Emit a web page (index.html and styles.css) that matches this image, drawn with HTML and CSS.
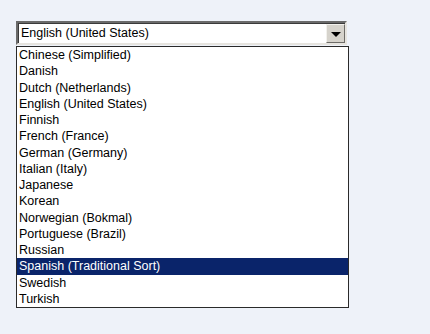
FILE: index.html
```html
<!DOCTYPE html>
<html lang="en">
<head>
<meta charset="utf-8">
<title>Language</title>
<link rel="stylesheet" href="styles.css">
</head>
<body>
<section id="wrapper">
  <div class="combo">
    <div class="combo-value">English (United States)</div>
    <div class="combo-button"><span class="arrow"></span></div>
  </div>
  <ul id="lang-list">
    <li>Chinese (Simplified)</li>
    <li>Danish</li>
    <li>Dutch (Netherlands)</li>
    <li>English (United States)</li>
    <li>Finnish</li>
    <li>French (France)</li>
    <li>German (Germany)</li>
    <li>Italian (Italy)</li>
    <li>Japanese</li>
    <li>Korean</li>
    <li>Norwegian (Bokmal)</li>
    <li>Portuguese (Brazil)</li>
    <li>Russian</li>
    <li class="selected">Spanish (Traditional Sort)</li>
    <li>Swedish</li>
    <li>Turkish</li>
  </ul>
</section>
</body>
</html>
```

FILE: styles.css
```css
body {
   margin: 0;
   background: #eef2f9;
   font: normal 12.5px/16.25px "Liberation Sans", Arial, sans-serif;
   color: #000;
}

#wrapper {
   padding: 21px 0 0 16px;
   width: 333px;
}

.combo {
   display: flex;
   height: 20px;
   width: 327px;
   background: #fff;
   border-top: 2px solid #6a6a6a;
   border-left: 2px solid #6a6a6a;
   border-bottom: 2px solid #e6e4df;
   border-right: 2px solid #e6e4df;
   box-shadow: inset 1px 1px 0 #3a3a3a;
}

.combo-value {
   flex: 1;
   padding: 2px 0 0 3px;
}

.combo-button {
   width: 17px;
   margin: 1px 0 0 0;
   display: flex;
   align-items: center;
   justify-content: center;
   background: #d6d3cc;
   border-top: 1px solid #f2f1ed;
   border-left: 1px solid #f2f1ed;
   border-bottom: 1px solid #6e6c68;
   border-right: 1px solid #6e6c68;
}

.arrow {
   width: 0;
   height: 0;
   border-left: 5px solid transparent;
   border-right: 5px solid transparent;
   border-top: 5px solid #000;
   margin-top: 1px;
}

#lang-list {
   list-style: none;
   margin: 1px 0 0 0;
   padding: 0;
   width: 331px;
   background: #fff;
   border: 1px solid #2a2a2a;
}

#lang-list li {
   padding-left: 2px;
   height: 16.25px;
   white-space: nowrap;
}

#lang-list li.selected {
   background: #0a246a;
   color: #fff;
}
```
